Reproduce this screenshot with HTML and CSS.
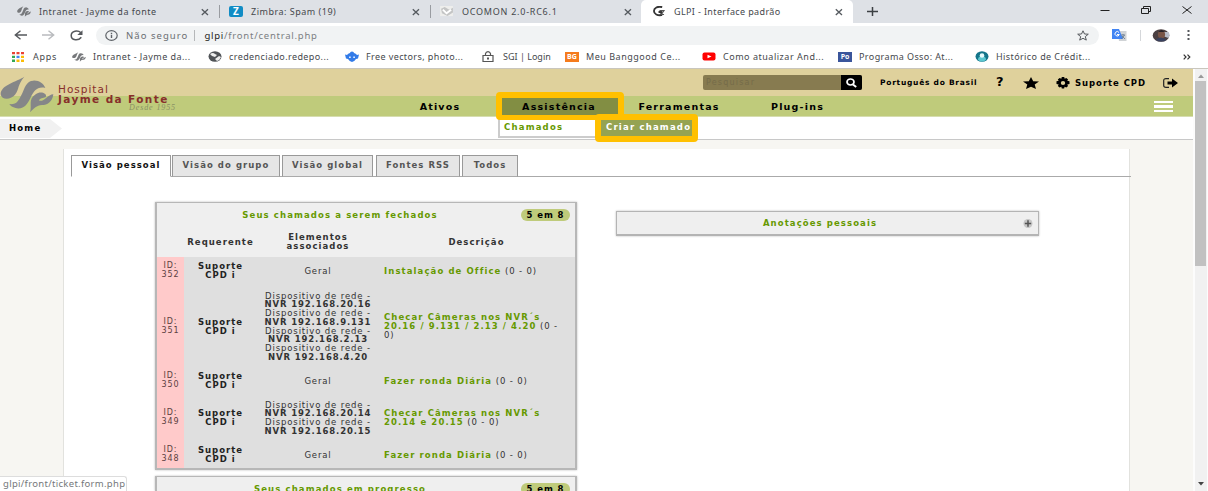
FILE: index.html
```html
<!DOCTYPE html>
<html lang="pt-BR">
<head>
<meta charset="utf-8">
<title>GLPI - Interface padrão</title>
<link rel="stylesheet" href="styles.css">
</head>
<body>
<svg class="defs" width="0" height="0">
  <symbol id="jf" viewBox="0 30 162 112" preserveAspectRatio="none"><path d="M73 32C50 47 2 57 2 85c3 19 32 17 44 0 13-18 5-26 27-53zM100 44c18-1 31 10 36 22-25-5-34 9-44 29-9 18-17 33-37 33-11 0-23-6-27-13 23 2 27-10 37-29 9-20 14-42 35-42zM160 85c-3 24-18 32-34 33-17 1-23 10-36 22 7-20-7-40 17-55 14-10 34-3 31 7-4 7-16 1-21 12 13 7 25-18 43-19z"/></symbol>
  <symbol id="close" viewBox="0 0 8 8"><path d="M.8 1.2 7 7M7 1.2.8 7" fill="none" stroke="#555a5f" stroke-width="1.3"/></symbol>
  <symbol id="gear" viewBox="0 0 14 12"><path d="M5.8 0h2.4l.5 1.7 1.6-.8 1.8 1.5-.9 1.4 2.3.5v2.8l-2.3.4.9 1.4-1.8 1.6-1.7-.8-.5 1.8H5.8l-.5-1.8-1.7.8-1.8-1.6.9-1.4-2.2-.4V4.3l2.2-.5-.9-1.4L3.600.9l1.7.8zM7 3.9a2.200 2 0 1 0 0 4 2.200 2 0 1 0 0-4" fill-rule="evenodd"/></symbol>
</svg>

<header class="browser">
  <div class="tabstrip">
    <div class="btab t1"><svg class="fav jfic"><use href="#jf"/></svg><span class="ttl s1">Intranet - Jayme da fonte</span><svg class="x"><use href="#close"/></svg></div>
    <div class="btab t2"><i class="fav zim">Z</i><span class="ttl s2">Zimbra: Spam (19)</span><svg class="x"><use href="#close"/></svg></div>
    <div class="btab t3"><svg class="fav" viewBox="0 0 15 12"><path d="M0 0h14v11H0z" fill="#eeeeec"/><path d="m1 3 4-2 5 3 4-2v5L8 11 2 8z" fill="#c4c5c5"/><path d="m3 4 4 4 5-4" fill="none" stroke="#fff" stroke-width="2"/></svg><span class="ttl s3">OCOMON 2.0-RC6.1</span><svg class="x"><use href="#close"/></svg></div>
    <div class="btab t4"><svg class="fav" viewBox="0 0 15 12"><path d="M11 1.2C6 0 2 2 2 5.500s4 5 8 4.500V6.500H7" fill="none" stroke="#333" stroke-width="2"/><path d="M8 5h5l-3 4.300h3" fill="none" stroke="#555" stroke-width="1.200"/></svg><span class="ttl s4">GLPI - Interface padrão</span><svg class="x"><use href="#close"/></svg></div>
    <svg class="plus" viewBox="0 0 11 9"><path d="M0 4.500h11M5.500 0v9" stroke="#3c4043" stroke-width="1.500"/></svg>
    <div class="wctl">
      <svg width="10" height="10" viewBox="0 0 10 10"><path d="M.5 5.500h9" stroke="#222"/></svg>
      <svg width="10" height="8" viewBox="0 0 10 8"><path d="M.5 2.500h7v5h-7zM2.500 2.500v-2h7v5h-2" fill="none" stroke="#222"/></svg>
      <svg width="10" height="8" viewBox="0 0 10 8"><path d="m.5.500 9 7M9.500.500l-9 7" stroke="#222"/></svg>
    </div>
  </div>
  <div class="toolbar">
    <svg width="13" height="10" viewBox="0 0 13 10"><path d="M13 5H1.500M6.500.700 1.300 5l5.200 4.300" fill="none" stroke="#55585c" stroke-width="1.400"/></svg>
    <svg width="13" height="10" viewBox="0 0 13 10"><path d="M0 5h11.500M6.500.700 11.700 5 6.500 9.300" fill="none" stroke="#b9bbbe" stroke-width="1.400"/></svg>
    <svg width="13" height="11" viewBox="0 0 13 11"><path d="M11 2.700C8 0 1.200.400 1.200 5.500S8.500 11 11.300 7.200" fill="none" stroke="#55585c" stroke-width="1.500"/><path d="M12.500.300V5H7.300z" fill="#55585c"/></svg>
    <div class="omni">
      <svg width="13" height="11" viewBox="0 0 13 11"><ellipse cx="6.500" cy="5.500" rx="5.700" ry="4.800" fill="none" stroke="#5f6368" stroke-width="1.200"/><path d="M6.500 4.800V8M6.500 2.700v1.200" stroke="#5f6368" stroke-width="1.400"/></svg>
      <span class="insecure">Não seguro</span><i class="sep"></i><span class="url"><b>glpi</b>/front/central.php</span>
      <svg class="bmstar" viewBox="0 0 12 11"><path d="m6 .800 1.500 3.200 3.800.200-3 2.400 1 3.500L6 8.300l-3.300 1.800 1-3.500-3-2.400L4.500 4z" fill="none" stroke="#55585c"/></svg>
    </div>
    <svg class="trans" viewBox="0 0 15 12"><path d="M5 2h9.500v10H7z" fill="#d0d3d6"/><path d="M0 0h7l4 10H0z" fill="#4285f4"/><path d="M7 3.500A2.200 2.200 0 1 0 7.300 5.500H5" stroke="#fff" fill="none"/><path d="M9 6h4M11 5v1M12.500 6 9.500 10M10 7l3 3" stroke="#60758b" stroke-width=".8"/></svg>
    <i class="tsep"></i>
    <svg class="avatar" viewBox="0 0 17 13"><ellipse cx="8.500" cy="6.500" rx="8.300" ry="6.300" fill="#4a3f41"/><path d="M10 3h6q2 3 0 6l-6-2z" fill="#b8bcc8"/><ellipse cx="9" cy="5.500" rx="3.600" ry="4" fill="#785446"/><path d="M6 3q3-4 6 0z" fill="#262228"/><path d="M3 11q5-5 11 0-5 3-11 0" fill="#39415e"/></svg>
    <svg class="dots" viewBox="0 0 3 10"><path d="M.5 0h2v2h-2zM.5 4h2v2h-2zM.5 8h2v2h-2z" fill="#55585c"/></svg>
  </div>
  <nav class="bookmarks">
    <span class="bk w60"><svg width="12" height="10" viewBox="0 0 12 10"><path d="M0 0h3v2.300H0zM4.500 0h3v2.300h-3zM9 0h3v2.300H9z" fill="#ea4335"/><path d="M0 3.800h3v2.300H0zM0 7.600h3v2.300H0z" fill="#34a853"/><path d="M4.500 3.800h3v2.300h-3z" fill="#4285f4"/><path d="M4.500 7.600h3v2.300h-3zM9 7.600h3v2.300H9zM9 3.800h3v2.300H9z" fill="#fbbc05"/></svg><em class="k1">Apps</em></span>
    <span class="bk w135"><svg class="jfic" width="14" height="10"><use href="#jf"/></svg><em class="k2">Intranet - Jayme da...</em></span>
    <span class="bk w137"><svg width="14" height="11" viewBox="0 0 14 11"><ellipse cx="7" cy="5.500" rx="6.500" ry="5.200" fill="#505357"/><path d="M2 3q3-2 5 0l2 1-2 2-3-1zM7 8l4-3 2 1q-1 3-4 4z" fill="#eee"/></svg><em class="k3">credenciado.redepo...</em></span>
    <span class="bk w137"><svg width="14" height="11" viewBox="0 0 14 11"><path d="M5 2Q5 .500 7 .500T9 2q2 .5 3 2l2-.5-1 4-2 .5Q9 11 7 11T3 8L1 7.500l-1-4 2 .5q1-1.500 3-2z" fill="#327be8"/><path d="M4 5.500h1.800v1.600H4zM8.200 5.500H10v1.600H8.200z" fill="#d9e9ff"/></svg><em class="k4">Free vectors, photo...</em></span>
    <span class="bk w83"><svg width="12" height="11" viewBox="0 0 12 11"><path d="M1 4.500h10v6H1zM3.500 4.500V2.700Q4 .6 6 .6t2.500 2.100v1.800" fill="none" stroke="#555" stroke-width="1.200"/><path d="M5 6.500h2v2H5z" fill="#555"/></svg><em class="k5">SGI | Login</em></span>
    <span class="bk w137"><i class="bg">BG</i><em class="k6">Meu Banggood Ce...</em></span>
    <span class="bk w135"><svg width="14" height="9" viewBox="0 0 14 9"><rect x=".5" y=".5" width="13" height="8" rx="2" fill="#f00"/><path d="m5.500 2.700 4 1.800-4 1.800z" fill="#fff"/></svg><em class="k7">Como atualizar And...</em></span>
    <span class="bk w137"><i class="bg po">Po</i><em class="k8">Programa Osso: At...</em></span>
    <span class="bk"><svg width="14" height="11" viewBox="0 0 14 11"><ellipse cx="7" cy="5.500" rx="6.500" ry="5.200" fill="#14758a"/><path d="M3 9q0-4 4-4t4 4q-4 3-8 0" fill="#5bc7d0"/><circle cx="7" cy="4.500" r="2.300" fill="#e6fbfc"/></svg><em class="k9">Histórico de Crédit...</em></span>
    <svg class="more" viewBox="0 0 8 6"><path d="m.7.700 2.300 2.300L.7 5.300M4.500.700 6.800 3 4.500 5.300" fill="none" stroke="#333" stroke-width="1.200"/></svg>
  </nav>
</header>

<div class="viewport">
  <main class="page">
    <div class="top">
      <div class="logo"><svg class="mark"><use href="#jf"/></svg><div class="name"><span class="hosp">Hospital</span><b>Jayme da Fonte</b><i>Desde 1955</i></div></div>
      <div class="right">
        <div class="prefs">
          <div class="search"><span>Pesquisar</span><svg viewBox="0 0 21 15"><path d="M0 0h19q2 0 2 2v11q0 2-2 2H0z"/><ellipse cx="9.500" cy="7" rx="3.500" ry="3" fill="none" stroke="#fff" stroke-width="1.700"/><path d="m12 9.500 3.200 2.500" stroke="#fff" stroke-width="2"/></svg></div>
          <b class="lang">Português do Brasil</b>
          <b class="help">?</b>
          <svg class="star" viewBox="0 0 16 12"><path d="m8 0 2.200 4.200 5.800.4-4.300 3L13 12 8 9.700 3 12l1.300-4.400L0 4.600l5.800-.4z"/></svg>
          <svg class="gear"><use href="#gear"/></svg><b class="user">Suporte CPD</b>
          <svg class="exit" viewBox="0 0 15 10"><path d="M6 .7H3Q.7.700.7 2.500v5Q.7 9.300 3 9.300h3" fill="none" stroke="#222" stroke-width="1.200"/><path d="M4.500 3.500H9V.500L15 5 9 9.500v-3H4.500z"/></svg>
        </div>
      </div>
      <nav class="menu"><b>Ativos</b><b class="on">Assistência</b><b class="fer">Ferramentas</b><b class="plu">Plug-ins</b><span class="burger"><i></i><i></i><i></i></span></nav>
    </div>
    <div class="crumbs"><b>Home</b><svg viewBox="0 0 12 19"><path d="M0 0 12 9.500 0 19z" fill="#f1f1f1"/></svg></div>
    <section class="content">
      <div class="tabs"><b class="sel">Visão pessoal</b><b class="a">Visão do grupo</b><b class="b">Visão global</b><b class="c">Fontes RSS</b><b class="d">Todos</b></div>
      <div class="cols">
        <div class="left">
          <div class="box">
            <div class="title"><span>Seus chamados a serem fechados</span><b class="pill">5 em 8</b></div>
            <div class="row head"><div></div><div>Requerente</div><div>Elementos<br>associados</div><div class="dh">Descrição</div></div>
            <div class="row r1"><div class="id">ID:<br>352</div><div class="q">Suporte<br>CPD i</div><div>Geral</div><div class="ds"><p><b>Instalação de Office</b> (0 - 0)</p></div></div>
            <div class="row r2"><div class="id">ID:<br>351</div><div class="q">Suporte<br>CPD i</div><div>Dispositivo de rede -<br><b>NVR 192.168.20.16</b><br>Dispositivo de rede -<br><b>NVR 192.168.9.131</b><br>Dispositivo de rede -<br><b>NVR 192.168.2.13</b><br>Dispositivo de rede -<br><b>NVR 192.168.4.20</b></div><div class="ds"><p><b>Checar Câmeras nos NVR´s<br>20.16 / 9.131 / 2.13 / 4.20</b> (0 -<br>0)</p></div></div>
            <div class="row r3"><div class="id">ID:<br>350</div><div class="q">Suporte<br>CPD i</div><div>Geral</div><div class="ds"><p><b>Fazer ronda Diária</b> (0 - 0)</p></div></div>
            <div class="row r4"><div class="id">ID:<br>349</div><div class="q">Suporte<br>CPD i</div><div>Dispositivo de rede -<br><b>NVR 192.168.20.14</b><br>Dispositivo de rede -<br><b>NVR 192.168.20.15</b></div><div class="ds"><p><b>Checar Câmeras nos NVR´s<br>20.14 e 20.15</b> (0 - 0)</p></div></div>
            <div class="row r5"><div class="id">ID:<br>348</div><div class="q">Suporte<br>CPD i</div><div>Geral</div><div class="ds"><p><b>Fazer ronda Diária</b> (0 - 0)</p></div></div>
          </div>
          <div class="box second"><div class="title"><span>Seus chamados em progresso</span><b class="pill">5 em 8</b></div></div>
        </div>
        <div class="notes"><span>Anotações pessoais</span><svg viewBox="0 0 10 10"><circle cx="5" cy="5" r="5" fill="#c6c6c6"/><path d="M1.500 5h7M5 1.500v7" stroke="#555" stroke-width="1.700"/></svg></div>
      </div>
    </section>
  </main>
  <aside class="scroll"><svg viewBox="0 0 6 4"><path d="M0 4h6L3 .500z" fill="#999"/></svg><div class="thumb"></div><svg class="dn" viewBox="0 0 6 4"><path d="M0 0h6L3 3.500z" fill="#444"/></svg></aside>
</div>
<div class="submenu"><b>Chamados</b><b class="hot">Criar chamado</b></div>
<div class="mark-box m1"></div>
<div class="mark-box m2"></div>
<div class="status">glpi/front/ticket.form.php</div>
</body>
</html>
```
FILE: styles.css
```css
* { box-sizing: border-box; }
html { overflow: hidden; }
body { margin: 0; width: 1208px; height: 491px; overflow: hidden; position: relative; background: #fff; font-family: "DejaVu Sans", sans-serif; font-size: 8.5px; color: #333; }
svg { flex: none; display: block; }
i, em { font-style: normal; }
.defs { position: absolute; }
.browser { height: 69px; font-family: "Noto Sans", sans-serif; font-size: 9px; color: #45484c; white-space: nowrap; border-bottom: 1px solid #c9c6bd; }
.tabstrip { height: 23px; background: #dee1e6; display: flex; align-items: center; padding-right: 4px; }
.btab { height: 23px; display: flex; align-items: center; width: 211px; padding: 0 13px 0 17px; position: relative; }
.t1 { width: 219px; padding-right: 10px; }
.t2 { padding-left: 10px; padding-right: 10px; }
.t3 { padding-left: 10px; padding-right: 9px; }
.t4 { background: #fff; border-radius: 5px 5px 0 0; width: 212px; padding-left: 11px; padding-right: 10px; height: 24px; }
.t2::before, .t3::before { content: ""; width: 1px; height: 13px; background: #999ca1; position: absolute; left: 0; top: 5px; }
.fav { width: 14px; height: 11px; margin-right: 8px; flex: none; }
.jfic { fill: #77797c; }
.zim { background: #118cc5; color: #fff; border-radius: 2px; font-weight: bold; font-size: 10px; line-height: 11px; text-align: center; }
.ttl { flex: 1; padding-bottom: 1px; }
.s1, .s2 { letter-spacing: .5px; }
.s3 { letter-spacing: .75px; }
.s4 { letter-spacing: .37px; }
.x { width: 8px; height: 8px; }
.plus { width: 11px; height: 9px; margin-left: 14px; }
.wctl { margin-left: auto; display: flex; gap: 31px; align-items: center; padding: 0 12px 4px 0; }
.toolbar { height: 23px; display: flex; align-items: center; padding: 1px 18px 0 14px; gap: 15px; background: #fff; }
.omni { width: 1005px; height: 19px; background: #f1f3f4; border-radius: 10px; display: flex; align-items: center; padding: 0 10px 0 9px; font-size: 9.5px; margin-left: -2px; }
.insecure { margin-left: 8px; letter-spacing: 1.05px; color: #6b6e72; }
.sep { width: 1px; height: 11px; background: #b5b7b9; margin: 0 9px 0 6px; }
.url { letter-spacing: .76px; color: #7b7e82; }
.url b { font-weight: normal; color: #222; }
.bmstar { width: 12px; height: 11px; margin-left: auto; }
.trans { width: 15px; height: 12px; margin-left: -2px; }
.tsep { width: 1px; height: 11px; background: #d5d7da; margin-left: -2px; }
.avatar { width: 18px; height: 13px; margin-left: -4px; }
.dots { width: 3px; height: 10px; margin-left: 2px; }
.bookmarks { height: 22px; display: flex; align-items: center; padding: 0 17px 1px 12px; }
.bk { display: flex; align-items: center; flex: none; }
.bk em { margin-left: 7px; letter-spacing: .4px; }
.bk .k1 { margin-left: 9px; letter-spacing: .7px; }
.bk .k2 { letter-spacing: .45px; }
.bk .k5 { margin-left: 9px; letter-spacing: 0; }
.bk .k6, .bk .k7 { letter-spacing: .52px; }
.w60 { width: 60px; } .w135 { width: 136px; } .w137 { width: 137px; } .w83 { width: 83px; }
.bg { width: 14px; height: 10px; background: #f57b1c; color: #fff; font: bold 7px/10px "Open Sans", sans-serif; text-align: center; }
.po { background: #3a559b; }
.more { width: 8px; height: 6px; margin-left: auto; }

.viewport { display: flex; height: 422px; overflow: hidden; }
.page { width: 1193px; background: #f7f6f2; }
.top { height: 48px; background: linear-gradient(#dfd19c 27px, #bfcb7b 27px); display: grid; grid-template: 27px 21px / 380px 1fr; border-bottom: 1px solid #d6ddb0; }
.logo { grid-row: 1 / 3; display: flex; padding-top: 7px; }
.mark { width: 54px; height: 37px; fill: #858688; }
.name { display: flex; flex-direction: column; width: 140px; padding: 7px 0 0 4px; color: #882f2b; }
.hosp { font-size: 10.5px; line-height: 12px; letter-spacing: 1px; }
.name b { font-size: 10.5px; line-height: 8px; letter-spacing: 1.4px; white-space: nowrap; }
.name i { font: italic 8px/9px "Liberation Serif", serif; color: #8a9165; margin-left: 71px; letter-spacing: .9px; }
.prefs { height: 27px; display: flex; align-items: center; color: #000; padding-left: 323px; white-space: nowrap; }
.search { width: 159px; height: 15px; background: #877b50; border-radius: 2px; display: flex; justify-content: space-between; color: #756b49; padding-left: 3px; line-height: 15px; flex: none; font-size: 8px; letter-spacing: 1.2px; }
.search svg { width: 21px; height: 15px; }
.lang { font-size: 7.5px; letter-spacing: .74px; margin-left: 18px; width: 98px; flex: none; }
.help { font-size: 13px; line-height: 12px; margin: -2px 0 0 18px; width: 9px; }
.star { width: 16px; height: 12px; margin-left: 18px; }
.gear { width: 14px; height: 12px; margin-left: 17px; }
.user { margin-left: 5px; width: 70px; letter-spacing: .95px; }
.exit { width: 15px; height: 10px; margin-left: 18px; }
.menu { display: flex; height: 20px; font-size: 9.5px; line-height: 21px; letter-spacing: 1.2px; color: #000; text-align: center; }
.menu b { width: 120px; }
.menu .on { background: #828e43; width: 118px; }
.menu .fer { width: 122px; } .menu .plu { width: 115px; }
.burger { width: 19px; margin: 4.5px 20px 0 auto; display: flex; flex-direction: column; gap: 2.5px; }
.burger i { height: 2.3px; background: #fff; }
.crumbs { height: 23px; background: #fff; border-bottom: 1px solid #c8c8c8; display: flex; align-items: center; padding-top: 1px; }
.crumbs b { width: 50px; height: 19px; line-height: 18px; padding-left: 9px; background: #f1f1f1; color: #000; letter-spacing: 1.2px; }
.crumbs svg { width: 12px; height: 19px; }
.content { margin: 9px 0 0 63px; width: 1067px; height: 342px; background: #fff; border: solid #e2e2de; border-width: 0 1px; padding: 6px 0 0 7px; }
.tabs { display: flex; height: 22px; width: 1060px; border-bottom: 1px solid #aaa; text-align: center; line-height: 18px; letter-spacing: 1.05px; font-size: 8.5px; color: #555; white-space: nowrap; }
.tabs b { border: 1px solid #999; border-bottom-color: #aaa; background: #e6e6e6; height: 22px; margin-right: 3px; }
.tabs .sel { width: 100px; background: #fff; border-bottom-color: #fff; color: #111; margin-right: 1px; }
.tabs .a { width: 108px; margin-right: 2px; } .tabs .b { width: 91px; } .tabs .c { width: 84px; margin-right: 2px; } .tabs .d { width: 56px; }
.cols { display: flex; padding: 25px 0 0 84px; }
.box { width: 422px; height: 268px; border: 1px solid #b7b7b7; border-width: 1px 2px 2px; background: #efefef; box-shadow: 0 0 2px #bbb; }
.second { margin-top: 6px; height: 15px; border-bottom: 0; }
.title { height: 24px; padding: 0 5px 1px 2px; display: flex; justify-content: space-between; align-items: center; color: #669900; font-weight: bold; }
.title span { flex: 1; text-align: center; letter-spacing: 1.12px; }
.pill { width: 49px; height: 12px; line-height: 12px; border-radius: 6px; background: #bfcb7b; color: #000; text-align: center; letter-spacing: .9px; }
.row { display: grid; grid-template-columns: 27px 73px 122px 1fr; align-items: center; text-align: center; line-height: 8.75px; background: #dfdfdf; white-space: nowrap; letter-spacing: .87px; }
.head { height: 30px; background: #efefef; font-weight: bold; letter-spacing: 1.05px; }
.head .dh { padding-right: 1px; }
.id { align-self: stretch; display: grid; align-content: center; background: #ffcaca; color: #5a4040; font-size: 8px; letter-spacing: .95px; }
.q { font-weight: bold; color: #222; letter-spacing: 1px; }
.ds { text-align: left; padding-left: 5px; }
.ds p { margin: 0; }
.ds b { color: #669900; letter-spacing: 1.1px; }
.r1 { height: 28px; } .r2 { height: 83px; } .r3 { height: 26px; } .r4 { height: 48px; } .r5 { height: 26px; }
.notes { margin: 9px 0 0 39px; width: 423px; height: 25px; background: #efefef; border: 1px solid #b4b4b4; border-bottom-width: 2px; box-shadow: 0 0 2px #bbb; display: flex; align-items: center; padding-right: 5px; }
.notes span { flex: 1; text-align: center; color: #669900; font-weight: bold; letter-spacing: 1.1px; }
.notes svg { width: 10px; height: 9px; }
.scroll { width: 15px; background: #f1f1f1; border-left: 2px solid #fcfcfc; border-right: 1px solid #fcfcfc; display: flex; flex-direction: column; align-items: center; padding: 5px 1px 5px 0; }
.scroll svg { width: 6px; height: 4px; }
.thumb { width: 11px; height: 185px; margin-top: 3px; background: #c1c1c1; }
.scroll .dn { margin-top: auto; }
.submenu { position: absolute; left: 498px; top: 117px; width: 198px; height: 21px; background: #fff; border: solid #ccc; border-width: 0 0 2px 2px; display: flex; color: #669900; line-height: 20px; letter-spacing: 1.2px; white-space: nowrap; }
.submenu b { padding-left: 4px; width: 101px; }
.submenu .hot { background: #95a352; color: #fff; width: 95px; padding-left: 5px; }
.mark-box { position: absolute; border: 6px solid #ffc000; border-radius: 4px; }
.m1 { left: 496px; top: 92px; width: 128px; height: 28px; border-bottom-width: 5px; }
.m2 { left: 595px; top: 114px; width: 103px; height: 28px; }
.status { position: absolute; left: 0; top: 476px; width: 127px; height: 15px; background: #fff; border: 1px solid #ddd; border-left: 0; border-bottom: 0; border-radius: 0 3px 0 0; padding-left: 3px; font: 9.5px/14px "Noto Sans", sans-serif; letter-spacing: .3px; color: #75777a; white-space: nowrap; }
```
